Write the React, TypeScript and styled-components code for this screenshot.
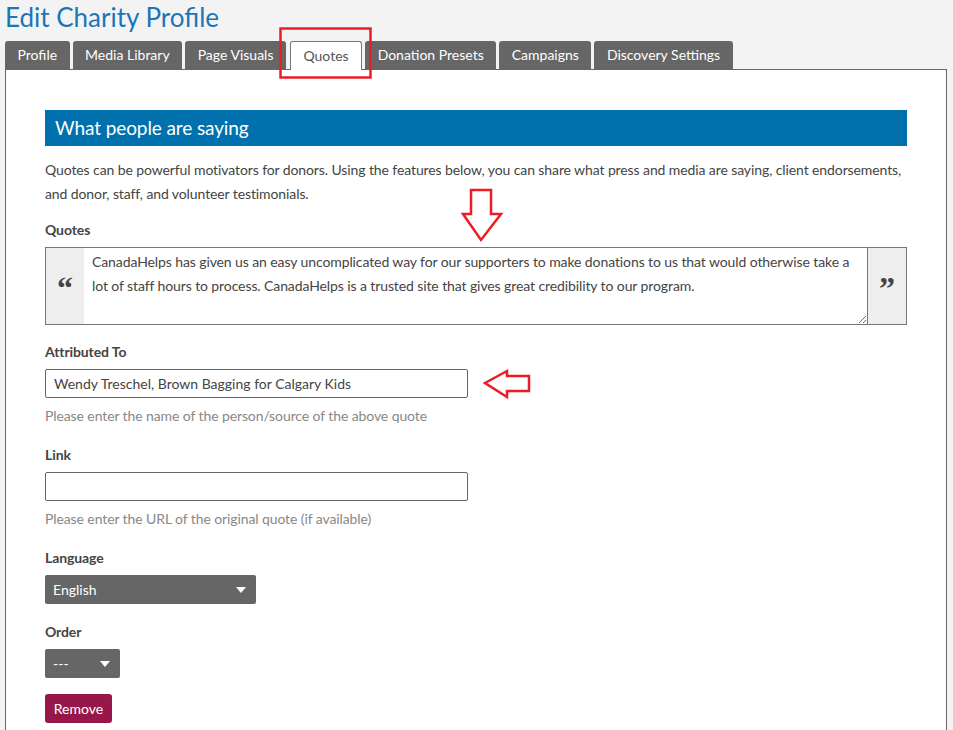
import React, { useState } from 'react'
import styled, { createGlobalStyle } from 'styled-components'

const GlobalStyle = createGlobalStyle`
  body {
    margin: 0;
    background: #f3f3f3;
    font-family: Lato, "Open Sans", sans-serif;
    color: #444;
    letter-spacing: -0.1px;
  }
`;

const Page = styled.div`
  position: relative;
  padding: 0 6px 20px 5px;
`;

const Title = styled.h1`
  margin: 0;
  padding-top: 1px;
  font-size: 26px;
  line-height: 32px;
  font-weight: 400;
  letter-spacing: 0;
  color: #1b76b8;
`;

const TabBar = styled.div`
  display: flex;
  gap: 3px;
  margin-top: 8px;
  position: relative;
  z-index: 1;
`;

const Tab = styled.div<{ active?: boolean }>`
  line-height: 28px;
  padding: 0 12.5px;
  font-size: 14px;
  letter-spacing: 0;
  border-radius: 3px 3px 0 0;
  box-sizing: border-box;
  background: ${p => (p.active ? '#fff' : '#666')};
  color: ${p => (p.active ? '#555' : '#fff')};
  border: ${p => (p.active ? '1px solid #777' : 'none')};
  border-bottom: none;
  margin-bottom: ${p => (p.active ? '-1px' : '0')};
  height: ${p => (p.active ? '29px' : '28px')};
  margin-left: ${p => (p.active ? '1px' : '0')};
  cursor: pointer;
`;

const Panel = styled.div`
  background: #fff;
  border: 1px solid #666;
  padding: 40px 39px 30px;
`;

const SectionHeader = styled.h2`
  margin: 0;
  height: 36px;
  line-height: 36px;
  padding: 0 10px;
  background: #0071ad;
  color: #fff;
  font-size: 19px;
  font-weight: 400;
`;

const Intro = styled.p`
  margin: 12px 0 14px;
  font-size: 14px;
  line-height: 24px;
`;

const Field = styled.div<{ spacing: number }>`
  margin-bottom: ${p => p.spacing}px;
`;

const Label = styled.label`
  display: block;
  font-size: 14px;
  line-height: 20px;
  font-weight: 700;
  color: #444;
  margin-bottom: 7px;
`;

const Help = styled.div`
  margin-top: 8px;
  font-size: 14px;
  line-height: 20px;
  color: #888;
`;

const QuoteBox = styled.div`
  display: flex;
  border: 1px solid #777;
  height: 78px;
  box-sizing: border-box;
`;

const QuoteMark = styled.div<{ side: 'left' | 'right' }>`
  width: 38px;
  flex: none;
  background: #eee;
  display: flex;
  align-items: center;
  justify-content: center;
  font-family: "Liberation Serif", serif;
  font-size: 32px;
  line-height: 32px;
  font-weight: 700;
  letter-spacing: 0;
  color: #444;
  padding-top: 4px;
  box-sizing: border-box;
  ${p => (p.side === 'right' ? 'border-left: 1px solid #777; width: 39px;' : '')}
`;

const QuoteText = styled.textarea`
  flex: 1;
  border: none;
  resize: vertical;
  padding: 2px 8px;
  font-family: Lato, sans-serif;
  font-size: 14px;
  line-height: 24px;
  letter-spacing: -0.1px;
  color: #444;
  outline: none;
`;

const TextInput = styled.input`
  display: block;
  width: 423px;
  height: 29px;
  box-sizing: border-box;
  border: 1px solid #666;
  border-radius: 2px;
  padding: 0 8px;
  font-family: Lato, sans-serif;
  font-size: 14px;
  color: #444;
`;

const SelectWrap = styled.div<{ width: number }>`
  position: relative;
  width: ${p => p.width}px;
  height: 29px;

  &::after {
    content: '';
    position: absolute;
    right: 10px;
    top: 12px;
    border-left: 5px solid transparent;
    border-right: 5px solid transparent;
    border-top: 6px solid #fff;
    pointer-events: none;
  }
`;

const Select = styled.select`
  appearance: none;
  width: 100%;
  height: 29px;
  border: none;
  border-radius: 2px;
  background: #666;
  color: #fff;
  padding: 0 8px;
  font-family: Lato, sans-serif;
  font-size: 14px;
`;

const RemoveButton = styled.button`
  width: 67px;
  height: 29px;
  border: none;
  border-radius: 3px;
  background: #98174a;
  color: #fff;
  font-family: Lato, sans-serif;
  font-size: 14px;
  padding: 0;
  cursor: pointer;
`;

const Annotations = styled.svg`
  position: absolute;
  top: 0;
  left: 0;
  pointer-events: none;
  z-index: 5;
`;

const tabs = ['Profile', 'Media Library', 'Page Visuals', 'Quotes', 'Donation Presets', 'Campaigns', 'Discovery Settings'];

export default function App() {
  const [active, setActive] = useState('Quotes');
  const [quote, setQuote] = useState(
    'CanadaHelps has given us an easy uncomplicated way for our supporters to make donations to us that would otherwise take a lot of staff hours to process. CanadaHelps is a trusted site that gives great credibility to our program.'
  );
  const [who, setWho] = useState('Wendy Treschel, Brown Bagging for Calgary Kids');
  const [link, setLink] = useState('');

  return (
    <>
      <GlobalStyle />
      <Page>
        <Title>Edit Charity Profile</Title>
        <TabBar>
          {tabs.map(t => (
            <Tab key={t} active={t === active} onClick={() => setActive(t)}>
              {t}
            </Tab>
          ))}
        </TabBar>
        <Panel>
          <SectionHeader>What people are saying</SectionHeader>
          <Intro>
            Quotes can be powerful motivators for donors. Using the features below, you can share what press and media are saying, client endorsements, and donor, staff, and volunteer testimonials.
          </Intro>

          <Field spacing={17}>
            <Label>Quotes</Label>
            <QuoteBox>
              <QuoteMark side="left">“</QuoteMark>
              <QuoteText value={quote} onChange={e => setQuote(e.target.value)} />
              <QuoteMark side="right">”</QuoteMark>
            </QuoteBox>
          </Field>

          <Field spacing={19}>
            <Label>Attributed To</Label>
            <TextInput value={who} onChange={e => setWho(e.target.value)} />
            <Help>Please enter the name of the person/source of the above quote</Help>
          </Field>

          <Field spacing={19}>
            <Label>Link</Label>
            <TextInput value={link} onChange={e => setLink(e.target.value)} />
            <Help>Please enter the URL of the original quote (if available)</Help>
          </Field>

          <Field spacing={18}>
            <Label>Language</Label>
            <SelectWrap width={211}>
              <Select defaultValue="en">
                <option value="en">English</option>
                <option value="fr">French</option>
              </Select>
            </SelectWrap>
          </Field>

          <Field spacing={16}>
            <Label>Order</Label>
            <SelectWrap width={75}>
              <Select defaultValue="">
                <option value="">---</option>
                <option value="1">1</option>
                <option value="2">2</option>
              </Select>
            </SelectWrap>
          </Field>

          <RemoveButton>Remove</RemoveButton>
        </Panel>

        <Annotations width="953" height="730" viewBox="0 0 953 730">
          <rect x="280.5" y="28.5" width="90" height="49" fill="none" stroke="#ed1c24" strokeWidth="2.5" />
          <polygon
            points="471,190 491,190 491,214 501,214 481,240 463,214 471,214"
            fill="none"
            stroke="#ed1c24"
            strokeWidth="2.5"
            strokeLinejoin="miter"
          />
          <polygon
            points="485,383 507,371 507,376 529,376 529,391 507,391 507,397"
            fill="none"
            stroke="#ed1c24"
            strokeWidth="2.5"
            strokeLinejoin="miter"
          />
        </Annotations>
      </Page>
    </>
  );
}
